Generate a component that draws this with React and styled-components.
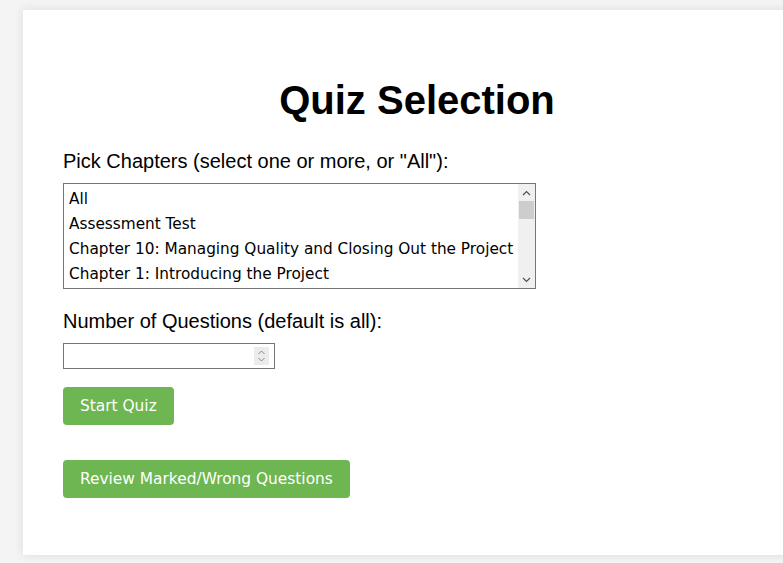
import React from 'react';
import styled, { createGlobalStyle } from 'styled-components';

const GlobalStyle = createGlobalStyle`
  html, body {
    margin: 0;
    padding: 0;
    background: #f4f4f4;
    overflow: hidden;
  }
  body {
    font-family: "Liberation Sans", Arial, sans-serif;
    color: #000;
  }
`;

const Page = styled.div`
  width: 783px;
  height: 563px;
  padding: 10px 0 0 23px;
  box-sizing: border-box;
  overflow: hidden;
`;

const Card = styled.div`
  width: 788px;
  height: 545px;
  box-sizing: border-box;
  background: #fff;
  box-shadow: 0 0 10px rgba(0, 0, 0, 0.1);
  padding: 40px 40px;
  display: flex;
  flex-direction: column;
  align-items: flex-start;
`;

const Title = styled.h1`
  align-self: stretch;
  margin: 27px 0 26px;
  text-align: center;
  font-size: 40px;
  line-height: 46px;
  font-weight: 700;
`;

const Label = styled.label`
  font-size: 20px;
  line-height: 24px;
  margin-bottom: 10px;
`;

const ListBox = styled.div`
  width: 473px;
  height: 106px;
  box-sizing: border-box;
  border: 1px solid #767676;
  display: flex;
  margin-bottom: 20px;
`;

const Options = styled.div`
  flex: 1;
  padding: 3px 0 0 5px;
  overflow: hidden;
`;

const Option = styled.div`
  height: 25px;
  line-height: 25px;
  font-family: "DejaVu Sans", Verdana, sans-serif;
  font-size: 15.3px;
  white-space: nowrap;
`;

const ScrollTrack = styled.div`
  width: 17px;
  background: #f0f0f0;
  display: flex;
  flex-direction: column;
  align-items: stretch;
`;

const ScrollArrow = styled.div`
  height: 17px;
  display: flex;
  align-items: center;
  justify-content: center;
`;

const ScrollThumb = styled.div`
  height: 18px;
  background: #cdcdcd;
  margin: 0 1px;
`;

const ScrollRest = styled.div`
  flex: 1;
`;

const NumberField = styled.div`
  width: 212px;
  height: 26px;
  box-sizing: border-box;
  border: 1px solid #767676;
  display: flex;
  align-items: center;
  margin-bottom: 18px;
`;

const NumberInput = styled.input`
  flex: 1;
  min-width: 0;
  border: none;
  outline: none;
  height: 100%;
  padding: 0 4px;
  font-size: 16px;
  background: transparent;
`;

const Spinner = styled.span`
  width: 15px;
  height: 18px;
  margin-right: 5px;
  background: #ececec;
  display: flex;
  align-items: center;
  justify-content: center;
`;

const Button = styled.button`
  height: 38px;
  padding: 0 17px;
  border: none;
  border-radius: 4px;
  background: #6db651;
  color: #fff;
  font-family: "DejaVu Sans", Verdana, sans-serif;
  font-size: 15.4px;
  cursor: pointer;
  margin-bottom: ${(p) => p.$gap || 0}px;
`;

const chapters = [
  'All',
  'Assessment Test',
  'Chapter 10: Managing Quality and Closing Out the Project',
  'Chapter 1: Introducing the Project',
];

function Chevron({ up }) {
  return (
    <svg width="9" height="6" viewBox="0 0 9 6">
      <path
        d={up ? 'M1 5 L4.5 1.5 L8 5' : 'M1 1 L4.5 4.5 L8 1'}
        fill="none"
        stroke="#505050"
        strokeWidth="1.2"
      />
    </svg>
  );
}

function App() {
  return (
    <Page>
      <GlobalStyle />
      <Card>
        <Title>Quiz Selection</Title>

        <Label>Pick Chapters (select one or more, or "All"):</Label>
        <ListBox>
          <Options>
            {chapters.map((c) => (
              <Option key={c}>{c}</Option>
            ))}
          </Options>
          <ScrollTrack>
            <ScrollArrow>
              <Chevron up />
            </ScrollArrow>
            <ScrollThumb />
            <ScrollRest />
            <ScrollArrow>
              <Chevron />
            </ScrollArrow>
          </ScrollTrack>
        </ListBox>

        <Label>Number of Questions (default is all):</Label>
        <NumberField>
          <NumberInput type="text" inputMode="numeric" />
          <Spinner>
            <svg width="9" height="14" viewBox="0 0 9 14">
              <path d="M1.5 5 L4.5 2 L7.5 5" fill="none" stroke="#8a8a8a" strokeWidth="1" />
              <path d="M1.5 9 L4.5 12 L7.5 9" fill="none" stroke="#8a8a8a" strokeWidth="1" />
            </svg>
          </Spinner>
        </NumberField>

        <Button $gap={35}>Start Quiz</Button>
        <Button>Review Marked/Wrong Questions</Button>
      </Card>
    </Page>
  );
}

export default App;
